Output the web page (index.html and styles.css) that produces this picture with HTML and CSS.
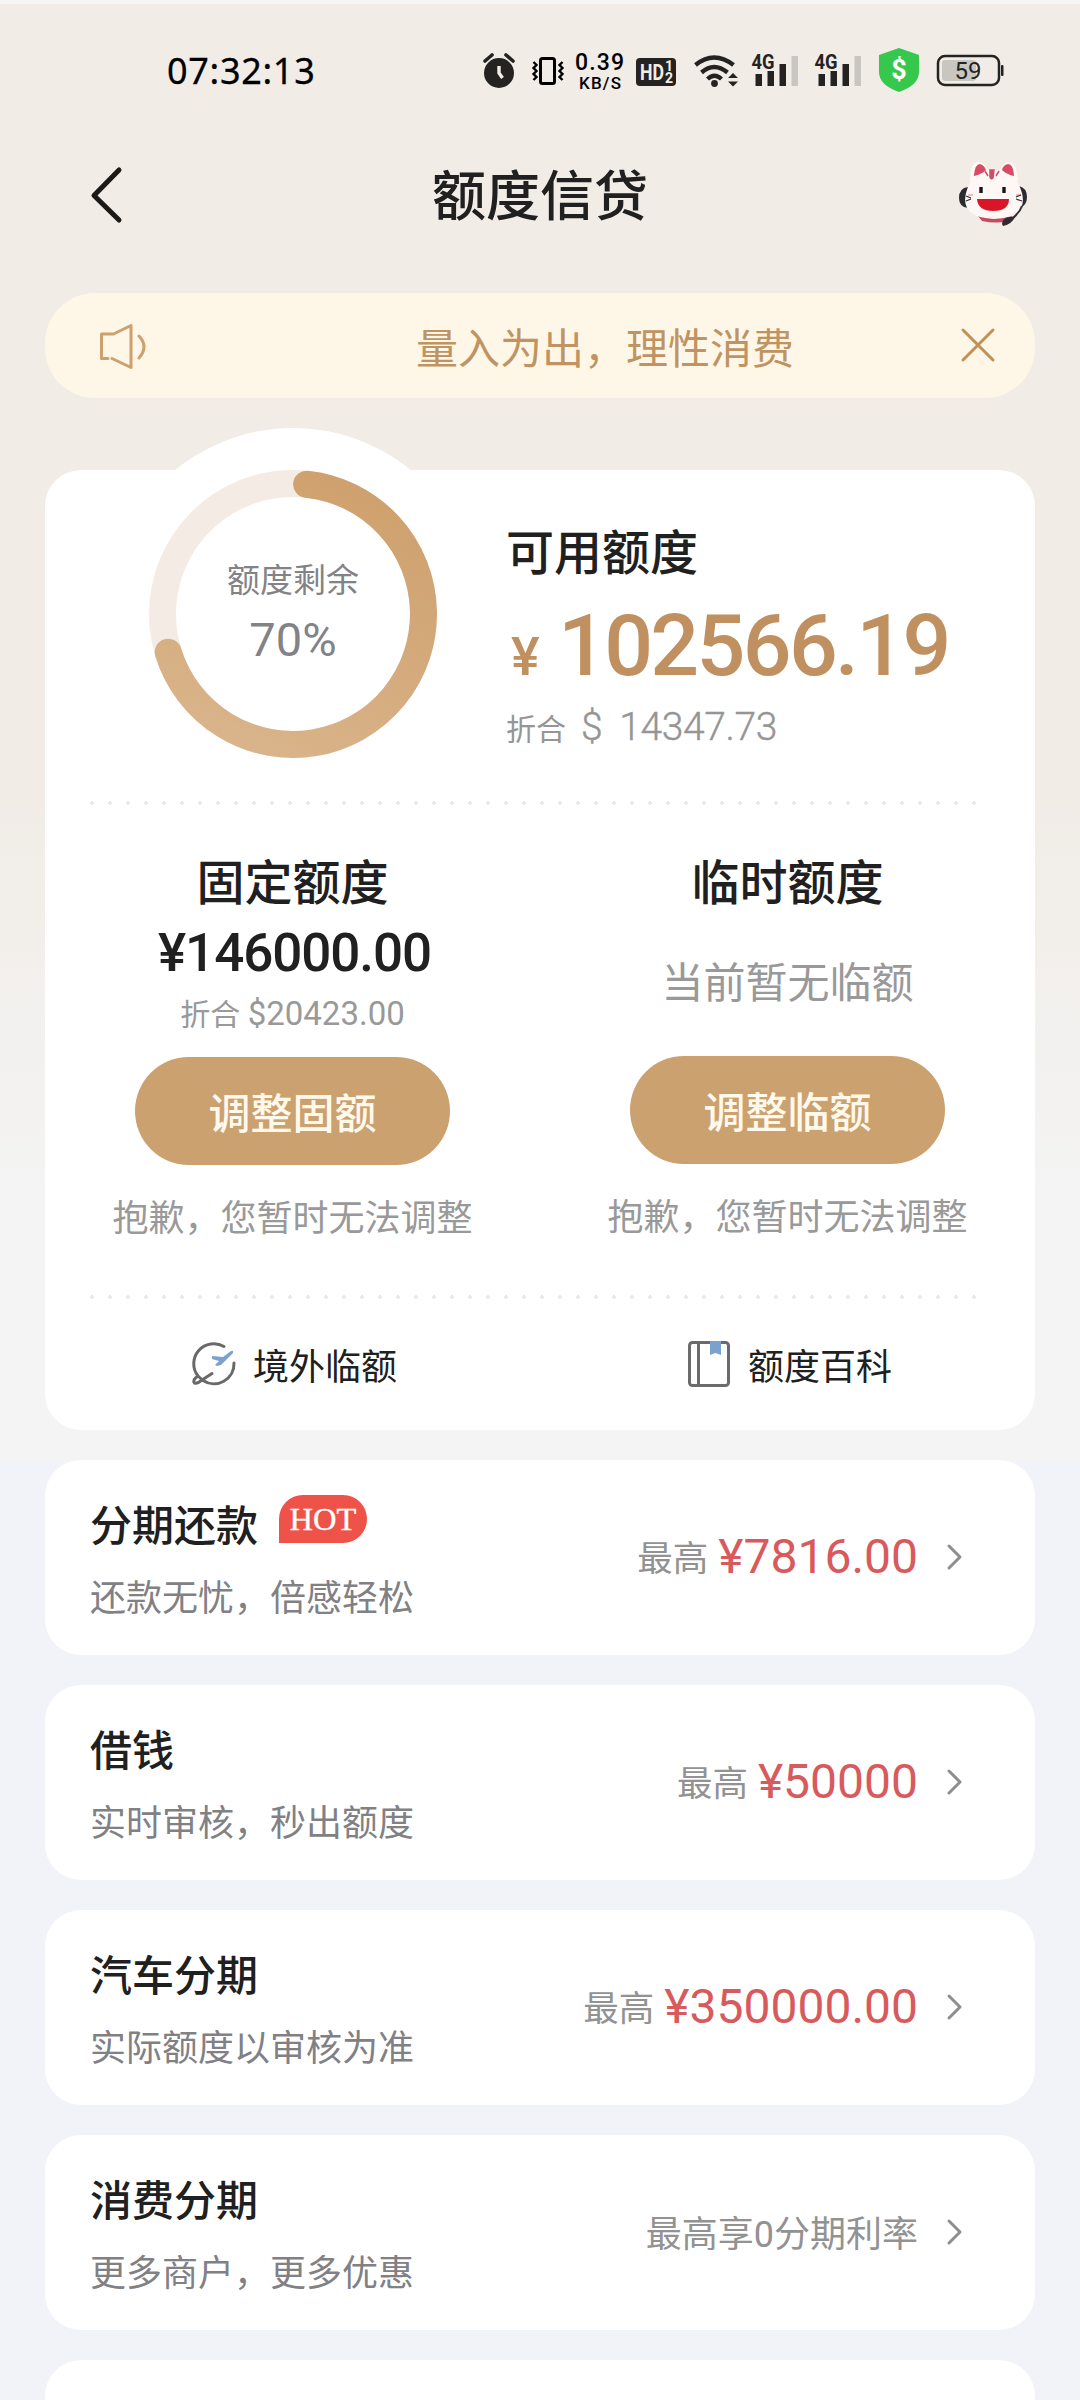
FILE: index.html
```html
<!DOCTYPE html>
<html lang="zh-CN">
<head>
<meta charset="utf-8">
<title>额度信贷</title>
<link rel="stylesheet" href="styles.css">
</head>
<body>
<div class="screen">
  <header class="status">
    <span class="clock">07:32:13</span>
    <svg class="status-icons" width="540" height="60" viewBox="470 40 540 60">
      <g fill="#252322">
        <circle cx="499" cy="73" r="15"/>
        <path d="M485 61l7-6M513 61l-7-6" stroke="#252322" stroke-width="3.6" stroke-linecap="round"/>
        <path d="M499 66v7l3.500 5" fill="none" stroke="#f1ede7" stroke-width="3.400"/>
      </g>
      <g fill="none" stroke="#000" stroke-width="3">
        <rect x="540.500" y="58.500" width="14" height="25" rx="2"/>
        <path d="M533.500 62l3 3-3 3 3 3-3 3 3 3-3 3M562.500 62l-3 3 3 3-3 3 3 3-3 3 3 3" stroke-width="2.400"/>
      </g>
      <text class="speed" x="599.500" y="70" font-size="23" textLength="49">0.39</text>
      <text class="speed" x="600" y="89" font-size="17" textLength="42">KB/S</text>
      <rect x="636" y="58" width="40" height="28" rx="4" fill="#252322"/>
      <text class="hd" x="652" y="80" font-size="22" textLength="24" lengthAdjust="spacingAndGlyphs">HD</text>
      <text class="hd" x="669" y="71" font-size="14">1</text>
      <text class="hd" x="669" y="83" font-size="14">2</text>
      <g fill="none" stroke="#252322" stroke-width="4.400">
        <path d="M695.500 65q18.500-15 38 0"/>
        <path d="M701.500 72.500q12.500-11 26 0"/>
        <path d="M707.500 79q7-6.500 14 0"/>
      </g>
      <circle cx="714.500" cy="83.500" r="3.400" fill="#252322"/>
      <path d="M728 78l5-5 5 5zM728 81.500l5 5 5-5z" fill="#252322"/>
      <g id="signal">
        <path d="M755.500 74h6.500v12h-6.500zM767.500 71h6.500v15h-6.500zM779.500 64h6.500v22h-6.500z" fill="#252322"/>
        <path d="M791.500 56h6.500v30h-6.500z" fill="#c9c5c0"/>
        <text class="net" x="763" y="69" font-size="20" textLength="23" lengthAdjust="spacingAndGlyphs">4G</text>
      </g>
      <use href="#signal" x="63"/>
      <path d="M899 48l20 7v17q0 13-20 20q-20-7-20-20v-17z" fill="#36c84d"/>
      <text class="dollar" x="899" y="79" font-size="27">$</text>
      <rect x="938" y="56" width="61" height="29" rx="7" fill="none" stroke="#252322" stroke-width="2.500"/>
      <rect x="942" y="60" width="34" height="21" rx="3" fill="#c9c6bf"/>
      <rect x="1001" y="65" width="2.500" height="11" rx="1" fill="#252322"/>
      <text class="battery" x="968" y="79" font-size="24">59</text>
    </svg>
  </header>

  <nav class="nav">
    <svg class="back" width="34" height="60" viewBox="90 164 34 60"><path d="M119 169L94 194.500L119 219" fill="none" stroke="#1c1a17" stroke-width="5" stroke-linecap="round" stroke-linejoin="round"/></svg>
    <h1>额度信贷</h1>
    <svg class="cat" width="90" height="80" viewBox="0 0 90 80">
      <path d="M18 32q-9 1-9 11q0 9 9 10zM69 31q8 2 8 11q0 8-7 11z" fill="#2c2c30"/>
      <path d="M28 61q15 4 35 0l-3 5q-14 3-28 0z" fill="#c94a60"/>
      <path d="M20 26Q20 6 29 7q7 1 9 9h11q4-8 9-9q9 0 10 19z" fill="#fdf8f6"/>
      <path d="M44 15Q66 15 72 38Q78 62 44 64Q10 62 16 38Q22 15 44 15z" fill="#fdf8f6"/>
      <path d="M24 20q1-11 6-11q4 1 6 6q-4 4-12 6zM64 20q-1-11-6-11q-5 1-6 6q4 4 12 6z" fill="#d94a63"/>
      <path d="M40 15h4l-1 8q-2 2-3-1zM35 16l3 5M49 16l-3 5" fill="#cf5066" stroke="#cf5066" stroke-width="1.500"/>
      <path d="M31 32v6M54 32v6" stroke="#171717" stroke-width="3.400"/>
      <path d="M27 44h32q0 12-16 12q-15 0-16-12z" fill="#db1528"/>
      <path d="M18 40h5M66 40h5" stroke="#f3bcc0" stroke-width="2"/>
      <path d="M16 41l5 2M16 46l5-2M71 40l-5 2M72 46l-6-2" stroke="#333" stroke-width="1.300"/>
      <path d="M72 51q-2 6-9 12" stroke="#2c2c30" stroke-width="2" fill="none"/>
      <path d="M52 69q0-6 8-7l5 0q-3 7-12 9z" fill="#2c2c30"/>
    </svg>
  </nav>

  <div class="notice">
    <svg width="50" height="48" viewBox="98 321 50 48"><path d="M108 357.500h-6.500v-24.500h12L131 324.500v42l-19-9M139 335q10 10.500 0 22" fill="none" stroke="#cda06c" stroke-width="3" stroke-linecap="round" stroke-linejoin="round"/></svg>
    <span>量入为出，理性消费</span>
    <svg width="38" height="38" viewBox="0 0 38 38"><path d="M4 3L34 33M34 3L4 33" stroke="#c19055" stroke-width="3" stroke-linecap="round"/></svg>
  </div>

  <section class="limit-card">
    <div class="overview">
      <div class="gauge">
        <svg width="372" height="372" viewBox="-186 -186 372 372">
          <defs><linearGradient id="arc" gradientUnits="userSpaceOnUse" x1="60" y1="-140" x2="-60" y2="150"><stop offset="0" stop-color="#cea06d"/><stop offset="1" stop-color="#dab58c"/></linearGradient></defs>
          <circle r="186" fill="#fff"/>
          <circle r="130.500" fill="none" stroke="#f4ece4" stroke-width="27"/>
          <path d="M13.600 -129.800A130.500 130.500 0 1 1 -124.800 38.200" fill="none" stroke="url(#arc)" stroke-width="27" stroke-linecap="round"/>
        </svg>
        <div class="gauge-label"><span>额度剩余</span><b>70%</b></div>
      </div>
      <div class="available">
        <h2>可用额度</h2>
        <div class="amount"><i>¥</i><span>102566.19</span></div>
        <div class="equiv"><span>折合</span><b>$ 14347.73</b></div>
      </div>
    </div>
    <div class="dots"></div>
    <div class="columns">
      <div class="col">
        <h2>固定额度</h2>
        <div class="fixed">¥146000.00</div>
        <div class="fixed-equiv">折合 <b>$20423.00</b></div>
        <button>调整固额</button>
        <p>抱歉，您暂时无法调整</p>
      </div>
      <div class="col">
        <h2>临时额度</h2>
        <div class="none">当前暂无临额</div>
        <button>调整临额</button>
        <p>抱歉，您暂时无法调整</p>
      </div>
    </div>
    <div class="dots"></div>
    <div class="links">
      <a>
        <svg width="48" height="50" viewBox="10 9 48 50"><path d="M44 16.500A20 20 0 0 0 18 46M54 33A20 20 0 0 1 23 50.500M18 46Q12 50 14.500 53Q17 54 22 50L32 43.500M18 46L23 50.500" fill="none" stroke="#696969" stroke-width="3" stroke-linecap="round" stroke-linejoin="round"/><path d="M32 26l11 1l8-6q3-1 2 2L41 35l-4 1l-2-1l4-4l-7-2z" fill="#7ba2ce"/></svg>
        <span>境外临额</span>
      </a>
      <a>
        <svg width="48" height="50" viewBox="0 0 48 50"><rect x="4.500" y="3.500" width="39" height="43" rx="3" fill="none" stroke="#6b6b6b" stroke-width="3"/><path d="M13.500 4v42" stroke="#6b6b6b" stroke-width="3"/><path d="M25 2h11v14l-5.500-2l-5.500 2z" fill="#7ba2ce"/></svg>
        <span>额度百科</span>
      </a>
    </div>
  </section>

  <ul class="products">
    <li>
      <div><h3>分期还款<em>HOT</em></h3><p>还款无忧，倍感轻松</p></div>
      <div class="value"><span>最高</span><b>¥7816.00</b><svg width="20" height="30" viewBox="0 0 20 30"><path d="M4 4L15 15L4 26" fill="none" stroke="#8e8e8e" stroke-width="3" stroke-linecap="round" stroke-linejoin="round"/></svg></div>
    </li>
    <li>
      <div><h3>借钱</h3><p>实时审核，秒出额度</p></div>
      <div class="value"><span>最高</span><b>¥50000</b><svg width="20" height="30" viewBox="0 0 20 30"><path d="M4 4L15 15L4 26" fill="none" stroke="#8e8e8e" stroke-width="3" stroke-linecap="round" stroke-linejoin="round"/></svg></div>
    </li>
    <li>
      <div><h3>汽车分期</h3><p>实际额度以审核为准</p></div>
      <div class="value"><span>最高</span><b>¥350000.00</b><svg width="20" height="30" viewBox="0 0 20 30"><path d="M4 4L15 15L4 26" fill="none" stroke="#8e8e8e" stroke-width="3" stroke-linecap="round" stroke-linejoin="round"/></svg></div>
    </li>
    <li>
      <div><h3>消费分期</h3><p>更多商户，更多优惠</p></div>
      <div class="value rate"><span>最高享0分期利率</span><svg width="20" height="30" viewBox="0 0 20 30"><path d="M4 4L15 15L4 26" fill="none" stroke="#8e8e8e" stroke-width="3" stroke-linecap="round" stroke-linejoin="round"/></svg></div>
    </li>
    <li></li>
  </ul>
</div>
</body>
</html>
```
FILE: styles.css
```css
* { box-sizing: border-box; margin: 0; padding: 0; }
body { width: 1080px; height: 2400px; overflow: hidden; }
h1, h2, h3 { font-weight: 500; }
b, i, em { font-weight: 400; font-style: normal; }
svg { display: block; flex: none; }
.screen {
  width: 1080px; height: 2400px; overflow: hidden;
  border-top: 4px solid #f5f5f3;
  font-family: Roboto, "Noto Sans CJK SC", sans-serif;
  color: #202020;
  background: linear-gradient(#f1ece6 0, #f1ece6 780px, #f4f4f4 1200px, #f4f4f4 1458px, #f2f3f8 1458px);
}
.status { height: 106px; padding: 36px 70px 0 167px; display: flex; justify-content: space-between; }
.clock { font: 400 36px/61px "Noto Sans", sans-serif; color: #000; letter-spacing: .7px; -webkit-text-stroke: .3px #000; }
.status-icons text { font-family: Roboto, sans-serif; text-anchor: middle; }
.speed { font-weight: 500; fill: #000; }
.hd { font-weight: 700; fill: #f1ede7; }
.net { font-weight: 700; fill: #252322; stroke: #f1ede7; stroke-width: 2px; paint-order: stroke; }
.dollar { font-weight: 700; fill: #fff; }
.battery { fill: #252322; }

.nav { height: 183px; padding: 0 40px 14px 90px; display: grid; grid-template-columns: 84px 1fr 134px; align-items: center; }
.nav h1 { font-size: 54px; line-height: 64px; text-align: center; padding-top: 6px; }
.cat { justify-self: end; }

.notice {
  height: 105px; margin: 0 45px; padding: 0 38px 0 53px; border-radius: 50px;
  display: flex; align-items: center;
  background: #fef7e7; color: #bf9462; font-size: 42px;
}
.notice span { margin: 0 auto 0 268px; }

.limit-card { margin: 72px 45px 30px; height: 960px; border-radius: 36px; background: #fff; }
.overview { height: 331px; display: flex; }
.gauge { width: 372px; height: 372px; margin: -42px 0 0 62px; position: relative; }
.gauge-label { position: absolute; inset: 0; padding-top: 132px; display: flex; flex-direction: column; align-items: center; color: #828287; }
.gauge-label span { font-size: 33px; line-height: 42px; }
.gauge-label b { font-size: 47px; line-height: 60px; margin-top: 8px; }
.available { margin-left: 27px; padding-top: 52px; }
.available h2 { font-size: 48px; line-height: 64px; }
.amount { display: flex; align-items: baseline; height: 96px; line-height: 96px; margin-top: 12px; color: #c09060; font-weight: 500; }
.amount i { font-size: 54px; font-weight: 500; width: 52px; padding-left: 5px; }
.amount span { font-size: 86px; letter-spacing: -2.700px; }
.equiv { display: flex; align-items: baseline; margin-top: 9px; font-size: 30px; line-height: 48px; color: #959595; gap: 15px; }
.equiv b { font-size: 39px; font-weight: 300; word-spacing: 8px; letter-spacing: -.4px; -webkit-text-stroke: .4px #959595; }

.dots { height: 4px; margin: 0 58px 0 44px; background: radial-gradient(circle at 3px 2px, #e9e9eb 1.600px, transparent 2.100px) 0 0 / 18px 4px repeat-x; }
.columns { height: 490px; display: flex; }
.col { flex: 1; display: flex; flex-direction: column; align-items: center; }
.col h2 { font-size: 48px; line-height: 64px; margin-top: 47px; }
.fixed { font-size: 53px; font-weight: 500; line-height: 64px; letter-spacing: -1.100px; margin: 5px 0 0 4px; }
.fixed-equiv { font-size: 30px; line-height: 44px; color: #999; margin-top: 7px; }
.fixed-equiv b { font-size: 33px; }
.none { font-size: 42px; line-height: 60px; color: #999; margin: 38px 0 22px; }
.col button {
  width: 315px; height: 108px; margin-top: 20px; border: 0; border-radius: 54px;
  background: #cca170; color: #fff9ec; font: 500 42px/106px "Noto Sans CJK SC", sans-serif;
}
.col p { font-size: 36px; line-height: 48px; color: #999; margin-top: 30px; }
.links { display: flex; height: 130px; }
.links a { flex: 1; display: flex; align-items: center; justify-content: center; gap: 16px; font-size: 36px; }
.links svg { margin-left: 2px; margin-right: -1px; }

.products { list-style: none; display: flex; flex-direction: column; gap: 30px; margin: 0 45px; }
.products li { height: 195px; flex: none; border-radius: 36px; background: #fff; padding: 0 70px 0 45px; display: flex; justify-content: space-between; }
.products h3 { font-size: 42px; line-height: 60px; margin-top: 37px; display: flex; }
.products em {
  width: 88px; height: 48px; margin: -2px 0 0 21px; border-radius: 24px 24px 24px 0;
  background: #ee5249; color: #fff; font: 400 32.500px/48px "Liberation Serif", serif; text-align: center;
  -webkit-text-stroke: .4px #fff;
}
.products p { font-size: 36px; line-height: 48px; color: #808085; margin-top: 18px; }
.value { display: flex; align-items: center; font-size: 35.500px; color: #929292; height: 194px; }
.value span { padding-bottom: 3px; }
.value b { font-size: 48px; line-height: 56px; padding-bottom: 1px; color: #d85a5c; margin-left: 10px; }
.value svg { margin-left: 27px; }
.rate { font-size: 36px; }
```
